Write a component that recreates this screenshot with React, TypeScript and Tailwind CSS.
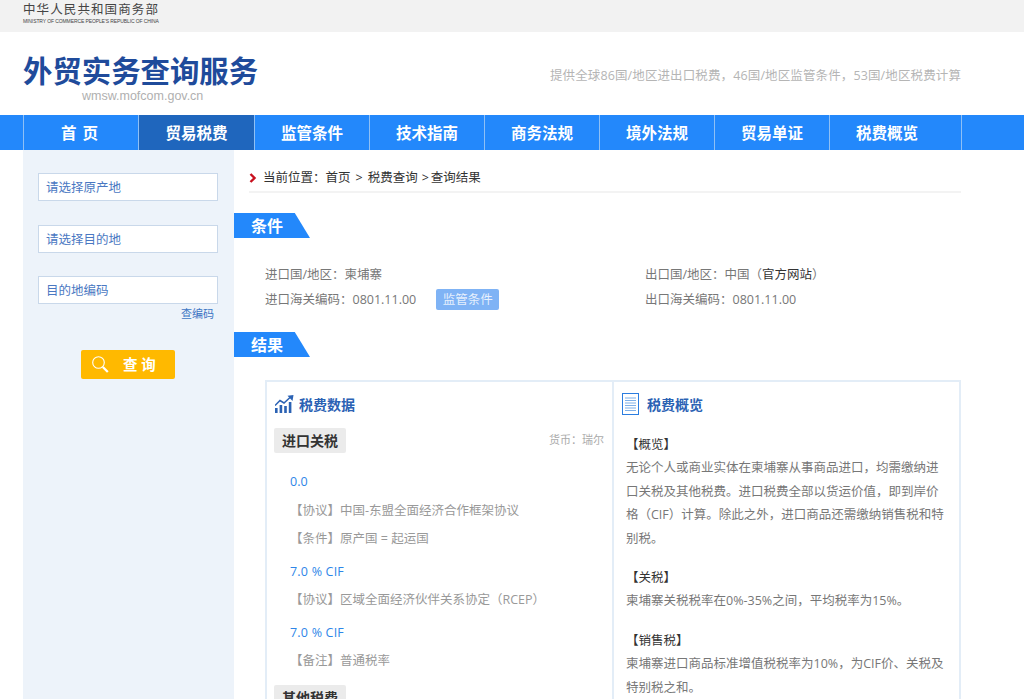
import React from 'react';

const navItems = ['首 页', '贸易税费', '监管条件', '技术指南', '商务法规', '境外法规', '贸易单证', '税费概览'];

const SectionTag = ({ title }: { title: string }) => (
  <div className="h-[25px] w-[76px] bg-[#2388fb] pl-[17px] text-[16px] leading-[27px] font-bold text-white [clip-path:polygon(0_0,80%_0,100%_100%,0_100%)]">
    {title}
  </div>
);

const ChartIcon = () => (
  <svg width="19" height="18" viewBox="0 0 19 18" className="ml-[1px] shrink-0" fill="#2b62b4">
    <rect x="0" y="13" width="2.6" height="5" />
    <rect x="4.6" y="10" width="2.6" height="8" />
    <rect x="9.2" y="11" width="2.6" height="7" />
    <rect x="13.8" y="7" width="2.6" height="11" />
    <path d="M0 10.5 L5 5.5 L9 8 L15 2.5" fill="none" stroke="#2b62b4" strokeWidth="1.5" />
    <path d="M12.5 0.8 L18.5 0 L17.5 6 Z" />
  </svg>
);

const DocIcon = () => (
  <svg width="17" height="22" viewBox="0 0 17 22" className="shrink-0">
    <rect x="0.5" y="0.5" width="16" height="21" fill="#fff" stroke="#2b7de0" />
    <path d="M3 5h11M3 7.5h11M3 10h11M3 12.5h11M3 15h11M3 17.5h11" stroke="#7fb0e8" strokeWidth="1" />
  </svg>
);

const SearchIcon = () => (
  <svg width="17" height="17" viewBox="0 0 17 17" className="shrink-0" fill="none" stroke="#fff">
    <circle cx="6.5" cy="6.5" r="5.8" strokeWidth="1.1" />
    <path d="M10.8 11 L15.8 16" strokeWidth="2.3" />
  </svg>
);

const App = () => {
  return (
    <div className="h-[699px] overflow-hidden bg-white font-['Open_Sans','Noto_Sans_CJK_SC',sans-serif] text-[12.5px]">
      {/* Top strip with the ministry name */}
      <div className="h-[32px] bg-[#f2f2f2] pl-[23px] pt-[4px] font-['Liberation_Sans','Noto_Sans_CJK_SC',sans-serif]">
        <div className="w-[140px] text-[12.5px] leading-[13px] tracking-[1.1px] text-[#444]">中华人民共和国商务部</div>
        <div className="mt-[1px] text-[5px] leading-[6px] whitespace-nowrap text-[#444] tracking-[-0.1px]">
          MINISTRY OF COMMERCE PEOPLE'S REPUBLIC OF CHINA
        </div>
      </div>

      {/* Site header */}
      <div className="flex h-[83px] justify-between pr-[63px] pl-[23px]">
        <div className="pt-[21px]">
          <div className="text-[29.4px] leading-[36px] font-bold whitespace-nowrap text-[#1f4b9b]">外贸实务查询服务</div>
          <div className="pl-[59px] font-['Liberation_Sans',sans-serif] text-[12.5px] leading-[14px] text-[#b0b0b0]">wmsw.mofcom.gov.cn</div>
        </div>
        <div className="pt-[35px] text-[12.5px] leading-[18px] tracking-[0.12px] text-[#b5b5b5]">
          提供全球86国/地区进出口税费，46国/地区监管条件，53国/地区税费计算
        </div>
      </div>

      {/* Main nav */}
      <ul className="flex h-[35px] bg-[#2388fb] pl-[23px]">
        {navItems.map((item, index) => (
          <li
            key={item}
            className={`h-[35px] border-r border-[#8fc0f5] text-center text-[15.5px] leading-[36px] font-bold text-white ${
              index === 0 ? 'w-[116px] border-l pr-[2px] tracking-[1px]' : index === 7 ? 'w-[132px] pr-[17px]' : index === 1 ? 'w-[116px]' : 'w-[115px]'
            } ${index === 1 ? 'bg-[#1f66bd]' : ''}`}
          >
            {item}
          </li>
        ))}
      </ul>

      <div className="flex pl-[23px]">
        {/* Query sidebar */}
        <div className="h-[549px] w-[211px] shrink-0 bg-[#edf3fa] pt-[23px] pl-[15px]">
          <div className="flex flex-col gap-[23.5px]">
            <div className="h-[28px] w-[180px] border-[1.5px] border-[#c9d8ea] bg-white pl-[7px] leading-[27px] text-[#4a78c2]">请选择原产地</div>
            <div className="h-[28px] w-[180px] border-[1.5px] border-[#c9d8ea] bg-white pl-[7px] leading-[27px] text-[#4a78c2]">请选择目的地</div>
            <div className="h-[28px] w-[180px] border-[1.5px] border-[#c9d8ea] bg-white pl-[7px] leading-[28px] text-[#4a78c2]">目的地编码</div>
          </div>
          <div className="w-[176px] pt-[2px] text-right text-[11px] leading-[16px] text-[#3d76c4]">查编码</div>
          <div className="mt-[28px] ml-[43px] flex h-[29px] w-[94px] items-center rounded-[2px] bg-[#ffb900] pl-[11px] text-[14.5px] font-bold text-white">
            <SearchIcon />
            <span className="ml-[14px]">查 询</span>
          </div>
        </div>

        <div className="w-[727px]">
          {/* Breadcrumb */}
          <div className="mt-[18px] ml-[15px] flex h-[25px] w-[712px] items-start border-b-2 border-[#f3f3f3] pt-[1px] leading-[18px] text-[#333]">
            <svg width="8" height="10" viewBox="0 0 8 10" className="mt-[4px] shrink-0">
              <path d="M1.5 1 L5.5 5 L1.5 9" fill="none" stroke="#c8101e" strokeWidth="2.4" />
            </svg>
            <span className="ml-[6px] whitespace-nowrap">
              当前位置：首页<span className="mx-[5px]">&gt;</span>税费查询<span className="mr-[2px] ml-[4px]">&gt;</span>查询结果
            </span>
          </div>

          <div className="mt-[20px]">
            <SectionTag title="条件" />
          </div>

          {/* Query conditions */}
          <div className="mt-[24px] grid grid-cols-[380px_1fr] pl-[31px] leading-[25px] text-[#777]">
            <div>进口国/地区：柬埔寨</div>
            <div>
              出口国/地区：中国（<span className="text-[#333]">官方网站</span>）
            </div>
            <div className="flex items-center">
              <span>进口海关编码：0801.11.00</span>
              <span className="ml-[20px] h-[21px] rounded-[2px] bg-[#7fb3f5] px-[6.5px] leading-[21px] text-[#e6f0fd]">监管条件</span>
            </div>
            <div>出口海关编码：0801.11.00</div>
          </div>

          <div className="mt-[20px]">
            <SectionTag title="结果" />
          </div>

          {/* Result panel */}
          <div className="mt-[23px] ml-[31px] flex w-[696px] border-2 border-[#e3edf7]">
            <div className="w-[347px] shrink-0 border-r-2 border-[#e3edf7] pt-[11px] pr-[8px] pl-[7px]">
              <div className="flex h-[22px] items-center gap-[5px]">
                <ChartIcon />
                <span className="text-[14px] font-bold text-[#2b62b4]">税费数据</span>
              </div>
              <div className="mt-[13px] flex items-center justify-between">
                <span className="h-[25px] w-[72px] rounded-[2px] bg-[#ebebeb] text-center text-[14px] leading-[25px] font-bold text-[#333]">进口关税</span>
                <span className="text-[11px] text-[#aaa]">货币：瑞尔</span>
              </div>
              <div className="mt-[15px] pl-[16px] text-[#999]">
                <div className="h-[28px] leading-[28px] text-[#2e86e8]">0.0</div>
                <div className="h-[29px] leading-[29px]">【协议】中国-东盟全面经济合作框架协议</div>
                <div className="h-[28px] leading-[28px]">【条件】原产国 = 起运国</div>
                <div className="mt-[5px] h-[28px] leading-[28px] tracking-[0.2px] text-[#2e86e8]">7.0 % CIF</div>
                <div className="h-[28px] leading-[28px]">【协议】区域全面经济伙伴关系协定（RCEP）</div>
                <div className="mt-[5px] h-[28px] leading-[28px] tracking-[0.2px] text-[#2e86e8]">7.0 % CIF</div>
                <div className="h-[28px] leading-[28px]">【备注】普通税率</div>
              </div>
              <div className="mt-[10px] h-[25px] w-[72px] rounded-[2px] bg-[#ebebeb] text-center text-[14px] leading-[25px] font-bold text-[#333]">其他税费</div>
            </div>

            <div className="min-w-0 flex-1 pt-[10px] pr-[11px] pl-[8px]">
              <div className="flex h-[24px] items-center gap-[8px]">
                <DocIcon />
                <span className="text-[14px] font-bold text-[#2b62b4]">税费概览</span>
              </div>
              <div className="mt-[17px] pl-[4px] leading-[23.4px] text-[#777]">
                <div className="text-[#333]">【概览】</div>
                <p>无论个人或商业实体在柬埔寨从事商品进口，均需缴纳进口关税及其他税费。进口税费全部以货运价值，即到岸价格（CIF）计算。除此之外，进口商品还需缴纳销售税和特别税。</p>
                <div className="mt-[16px] text-[#333]">【关税】</div>
                <p>柬埔寨关税税率在0%-35%之间，平均税率为15%。</p>
                <div className="mt-[16px] text-[#333]">【销售税】</div>
                <p>柬埔寨进口商品标准增值税税率为10%，为CIF价、关税及特别税之和。</p>
              </div>
            </div>
          </div>
        </div>
      </div>
    </div>
  );
};

export default App;
